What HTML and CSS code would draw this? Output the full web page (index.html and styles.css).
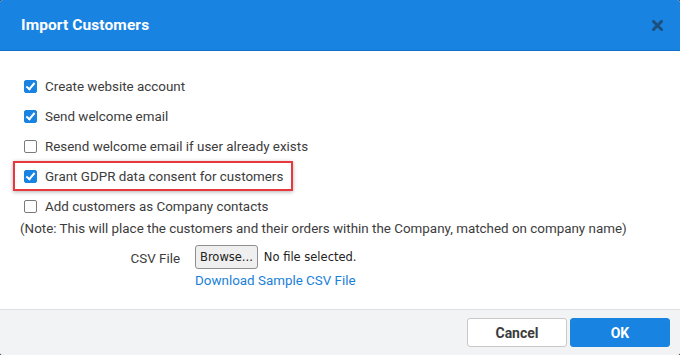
FILE: index.html
```html
<!DOCTYPE html>
<html lang="en">
<head>
  <meta charset="UTF-8" />
  <title>Import Customers</title>
  <link rel="stylesheet" href="styles.css">
</head>
<body>
  <div class="dialog">
    <div class="dialog-header">
      <h3>Import Customers</h3>
      <svg class="close-btn" width="11" height="11" viewBox="0 0 11 11">
        <path d="M1.5 1.5 L9.5 9.5 M9.5 1.5 L1.5 9.5" stroke="#1d4f7e" stroke-width="3" stroke-linecap="square"/>
      </svg>
    </div>

    <div class="dialog-body">
      <label class="check-row"><span class="box checked"></span>Create website account</label>
      <label class="check-row"><span class="box checked"></span>Send welcome email</label>
      <label class="check-row"><span class="box"></span>Resend welcome email if user already exists</label>
      <label class="check-row highlight"><span class="box checked"></span>Grant GDPR data consent for customers</label>
      <label class="check-row"><span class="box"></span>Add customers as Company contacts</label>
      <p class="note">(Note: This will place the customers and their orders within the Company, matched on company name)</p>

      <div class="file-row">
        <span class="file-label">CSV File</span>
        <div class="file-field">
          <div class="file-input">
            <span class="browse-btn">Browse...</span>
            <span class="file-name">No file selected.</span>
          </div>
          <a class="sample-link" href="#">Download Sample CSV File</a>
        </div>
      </div>
    </div>

    <div class="dialog-footer">
      <button class="btn btn-cancel">Cancel</button>
      <button class="btn btn-ok">OK</button>
    </div>
  </div>
</body>
</html>
```

FILE: styles.css
```css
* {
  box-sizing: border-box;
}

body {
  margin: 0;
  background: #3a3a3a;
  font-family: Roboto, 'Liberation Sans', sans-serif;
  font-size: 13.4px;
  color: #3c3c3c;
}

.dialog {
  width: 680px;
  height: 355px;
  background: #fff;
  border-radius: 3px;
  overflow: hidden;
  display: flex;
  flex-direction: column;
}

.dialog-header {
  height: 51px;
  background: #1883e0;
  border-bottom: 1px solid #1370c4;
  display: flex;
  align-items: center;
  justify-content: space-between;
  padding: 0 17px 0 21px;
}

.dialog-header h3 {
  margin: 0;
  color: #fff;
  font-size: 15.5px;
  font-weight: bold;
  letter-spacing: 0.1px;
}

.close-btn {
  display: block;
  margin-top: 1px;
}

.dialog-body {
  flex: 1;
  padding: 20px 0 0 20px;
}

.check-row {
  display: flex;
  align-items: center;
  height: 30px;
  padding-left: 4px;
  width: 273px;
  white-space: nowrap;
}

.check-row .box {
  width: 13px;
  height: 13px;
  border: 1.5px solid #7a7a7a;
  border-radius: 2px;
  margin-right: 8px;
  flex-shrink: 0;
  position: relative;
}

.check-row .box.checked {
  background: #1883e0;
  border-color: #1883e0;
}

.check-row .box.checked::after {
  content: '';
  position: absolute;
  left: 3px;
  top: 0px;
  width: 3px;
  height: 7px;
  border: solid #fff;
  border-width: 0 2px 2px 0;
  transform: rotate(40deg);
}

.check-row.highlight {
  margin-left: -7px;
  padding-left: 9px;
  width: 280px;
  border: 2px solid #e8383d;
  box-shadow: 0 1px 4px rgba(0, 0, 0, 0.3);
}

.note {
  margin: 0;
  line-height: 16px;
}

.file-row {
  display: flex;
  margin-top: 8px;
}

.file-label {
  width: 175px;
  text-align: right;
  padding-right: 15px;
  padding-top: 6px;
}

.file-field {
  display: flex;
  flex-direction: column;
}

.file-input {
  display: flex;
  align-items: center;
  gap: 6px;
}

.browse-btn {
  display: inline-block;
  border: 1px solid #8f8f8f;
  border-radius: 3px;
  background: #efefef;
  color: #222;
  padding: 4px 4px;
  font-family: 'DejaVu Sans', sans-serif;
  font-size: 11.5px;
}

.file-name {
  color: #222;
  font-family: 'DejaVu Sans', sans-serif;
  font-size: 11.5px;
}

.sample-link {
  color: #1a7fd8;
  text-decoration: none;
  margin-top: 4px;
}

.dialog-footer {
  height: 46px;
  background: #f2f3f5;
  border-top: 1px solid #dedfe1;
  display: flex;
  justify-content: flex-end;
  align-items: center;
  gap: 3px;
  padding-right: 10px;
}

.btn {
  width: 100px;
  height: 29px;
  border-radius: 3px;
  font-family: Roboto, 'Liberation Sans', sans-serif;
  font-size: 14px;
  font-weight: bold;
  cursor: pointer;
}

.btn-cancel {
  background: #fff;
  border: 1px solid #c8c8c8;
  color: #3c3c3c;
}

.btn-ok {
  background: #1883e0;
  border: 1px solid #1883e0;
  color: #fff;
}
```
